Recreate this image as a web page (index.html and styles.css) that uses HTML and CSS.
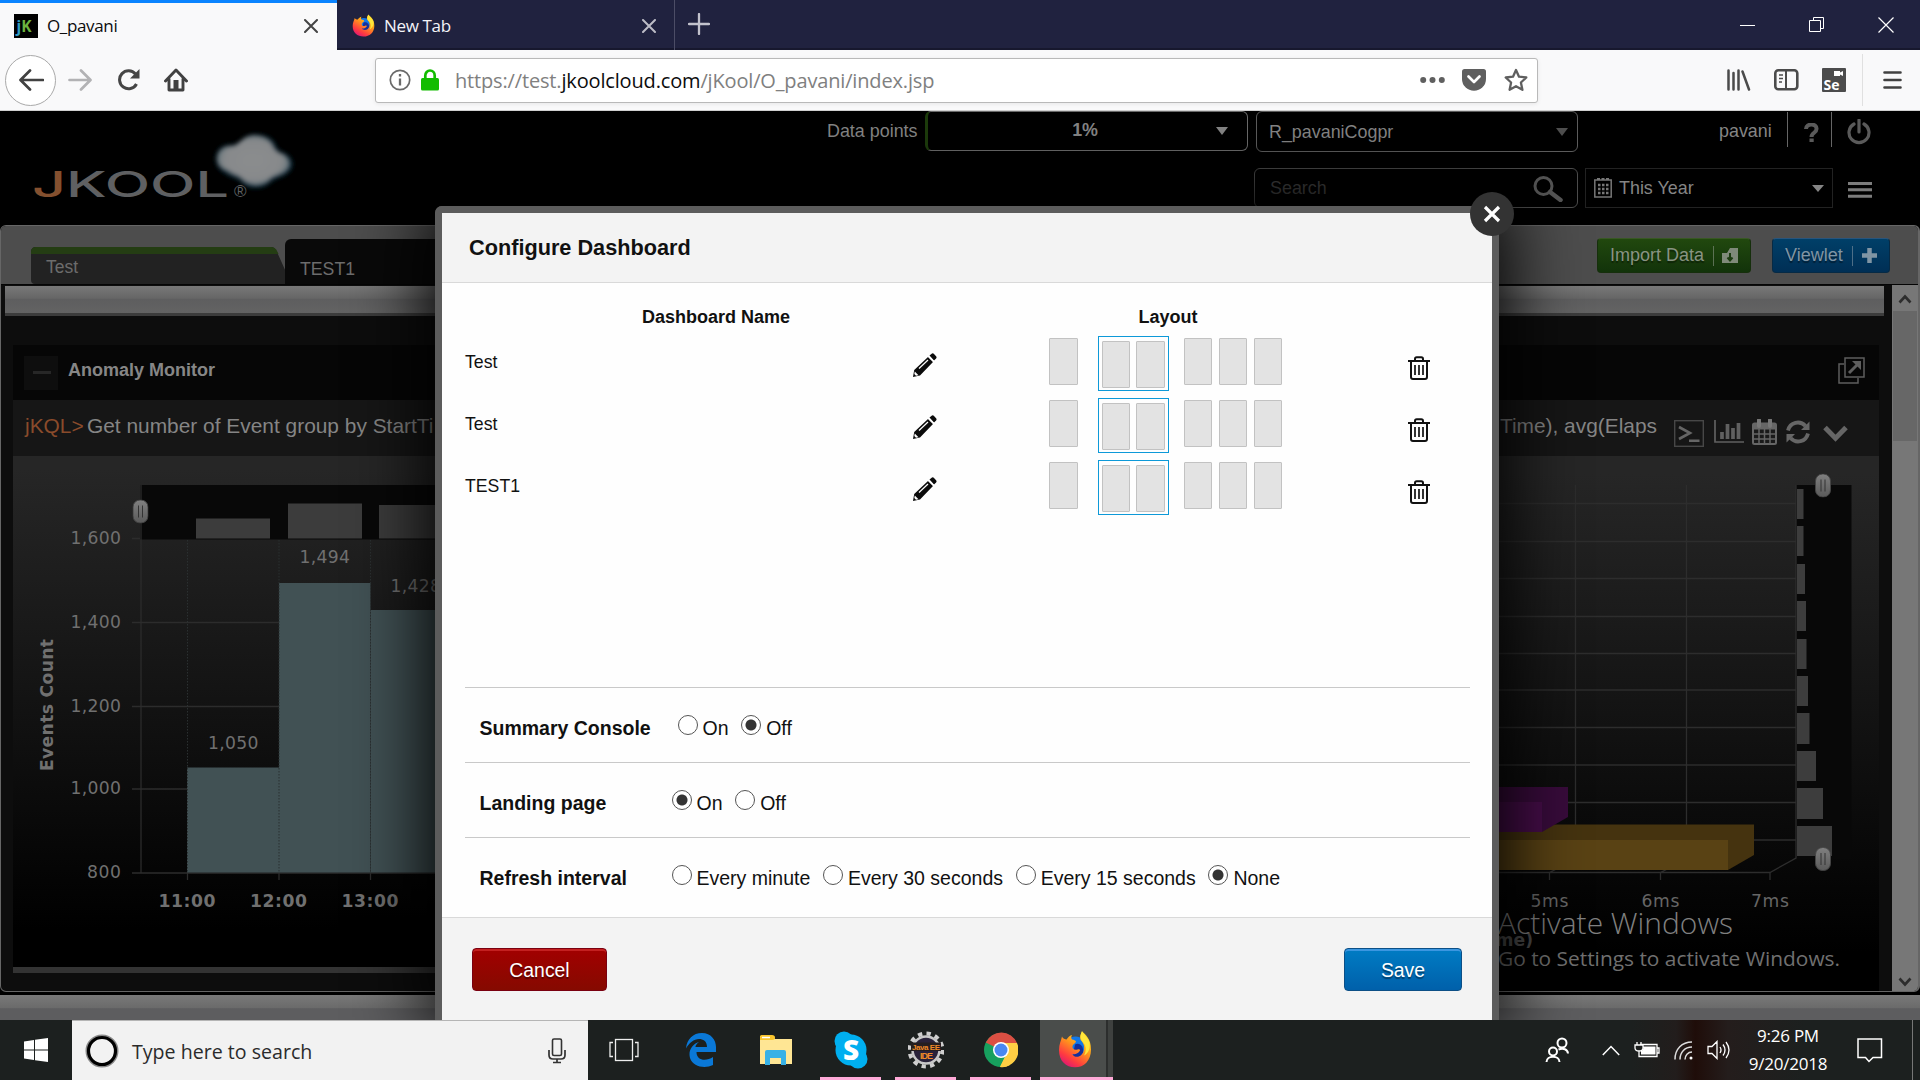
FILE: index.html
```html
<!DOCTYPE html>
<html lang="en">
<head>
<meta charset="utf-8">
<title>O_pavani</title>
<link rel="stylesheet" href="styles.css">
</head>
<body>
<svg class="defs" width="0" height="0" aria-hidden="true">
  <defs>
    <linearGradient id="fire" x1="0.8" y1="0" x2="0.2" y2="1"><stop offset="0" stop-color="#ffe226"/><stop offset=".4" stop-color="#ff9a1a"/><stop offset=".75" stop-color="#ff3b40"/><stop offset="1" stop-color="#d9127c"/></linearGradient>
    <linearGradient id="knob" x1="0" y1="0" x2="0" y2="1"><stop offset="0" stop-color="#808080"/><stop offset="1" stop-color="#5a5a5a"/></linearGradient>
    <radialGradient id="puff"><stop offset="0" stop-color="#8b8d8e"/><stop offset=".8" stop-color="#87898b"/><stop offset="1" stop-color="#6f7b80"/></radialGradient>
    <filter id="soft" x="-20%" y="-20%" width="140%" height="140%"><feGaussianBlur stdDeviation="2.2"/></filter>
    <symbol id="firefox" viewBox="0 0 34 34">
      <circle cx="17.5" cy="17" r="12" fill="#1278e8"/>
      <path fill="#14309b" d="M17 12c5-2 9 2 8 7s-6 8-11 6z"/>
      <path fill="url(#fire)" d="M4 5c1 2 3 2.500 4.500 2.500C10 5.500 12 4 14 3.500c-1 1.500-1 3 0 4 2 .5 3.500.5 4 2-.5 2-3 2-3.500 4-.5 3 2.500 4 5 3 1.500-.5 2.500 0 2.500 1-2 3-5.500 4-8 3 4 5 11 2 12-4 .6-4-1-6-3-8-2-3 0-6 1-8 4 3 9 7 9 16 0 10-7 16-16 16S1 27 1 17C1 12 3 9 4 5z"/>
      <path fill="#ffe63b" d="M24 0c-2 4-2 7 1 10 4 4 3 9 1 12 5-2 7-8 5-13-1-3-5-5-7-9z"/>
    </symbol>
    <symbol id="pencil" viewBox="0 0 24 24">
      <path fill="#0b0b0b" d="M16.500 2.500 19 .600q1-.6 2 .3l2.300 2.600q.7 1-.2 1.900L21 7.500zM15 4l5 5L7 22.500 0 24l1.200-7z"/>
      <path d="M6 15.500 15 7" stroke="#fff" stroke-width="1.200"/><path fill="#fff" d="M1.800 18.500 5.500 22.200 3 22.700 1.300 21z"/><path d="M15.500 3.200 20.800 8.500" stroke="#fff" stroke-width="1.300"/>
    </symbol>
    <symbol id="trash" viewBox="0 0 22 24">
      <g fill="none" stroke="#111" stroke-width="2"><path d="M0 5h22M7 4.500V3q0-1.700 1.700-1.700h4.600Q15 1.300 15 3v1.500M3 5.500V21q0 2 2 2h12q2 0 2-2V5.500"/><path stroke-width="1.700" d="M7 9v10M11 9v10M15 9v10"/></g>
    </symbol>
    <symbol id="grip" viewBox="0 0 16 24"><rect x=".5" y=".5" width="15" height="23" rx="7" fill="url(#knob)" stroke="#444"/><path d="M6 6v12M10 6v12" stroke="#333"/></symbol>
  </defs>
</svg>

<header class="titlebar">
  <div class="tab active"><svg width="24" height="24" viewBox="0 0 24 24"><rect width="24" height="24"/><text x="2.500" y="17.500" font-family="Open Sans,sans-serif" font-weight="700" font-size="15.500" fill="#2f9bc4">j<tspan fill="#6cb33e">K</tspan></text></svg>
    <span class="tab-name">O_pavani</span>
    <svg class="tab-x" width="14" height="14" viewBox="0 0 14 14"><path d="M1 1l12 12M13 1 1 13" stroke="#444" stroke-width="2" stroke-linecap="round"/></svg></div>
  <div class="tab"><svg width="23" height="24"><use href="#firefox"/></svg>
    <span class="tab-name">New Tab</span>
    <svg class="tab-x" width="14" height="14" viewBox="0 0 14 14"><path d="M1 1l12 12M13 1 1 13" stroke="#bcbcc6" stroke-width="2" stroke-linecap="round"/></svg></div>
  <svg class="new-tab" width="22" height="22" viewBox="0 0 22 22"><path d="M11 1v20M1 11h20" stroke="#c2c2cc" stroke-width="2.300" stroke-linecap="round"/></svg>
  <div class="win-controls">
    <svg width="16" height="16" viewBox="0 0 16 16"><path d="M0 8.500h15" stroke="#fff"/></svg>
    <svg width="16" height="16" viewBox="0 0 16 16"><path d="M4.500 3.500v-3h10v11h-3M.5 3.500h11v11H.5z" fill="none" stroke="#fff"/></svg>
    <svg width="16" height="16" viewBox="0 0 16 16"><path d="M.5.500l15 15M15.500.500l-15 15" stroke="#fff" stroke-width="1.200"/></svg>
  </div>
</header>

<nav class="toolbar">
  <span class="back"><svg width="26" height="22" viewBox="0 0 26 22"><path d="M12 1.500 2.500 11l9.500 9.500M3 11h22" fill="none" stroke="#414141" stroke-width="2.700" stroke-linecap="round" stroke-linejoin="round"/></svg></span>
  <svg class="fwd" width="25" height="22" viewBox="0 0 25 22"><path d="M13 1.500l9.500 9.500-9.500 9.500M22 11H1.500" fill="none" stroke="#b2b2b4" stroke-width="2.700" stroke-linecap="round" stroke-linejoin="round"/></svg>
  <svg class="reload" width="24" height="22" viewBox="0 0 24 22"><path d="M18.500 5A9 9 0 1 0 19.500 15" fill="none" stroke="#454545" stroke-width="3"/><path d="M22.500 0v9.500H13z" fill="#454545"/></svg>
  <svg class="home" width="24" height="24" viewBox="0 0 24 24"><path d="M1.500 13 12 2l10.500 11M5 11v11h14V11" fill="none" stroke="#414141" stroke-width="2.900" stroke-linejoin="round" stroke-linecap="round"/><path d="M9.500 12h5v10h-5z" fill="#414141"/></svg>
  <div class="urlbar">
    <svg width="22" height="22" viewBox="0 0 22 22"><circle cx="11" cy="11" r="9.700" fill="none" stroke="#6a6a6a" stroke-width="1.700"/><path d="M11 9.500v7M11 5v2.500" stroke="#6a6a6a" stroke-width="2.300"/></svg>
    <svg class="lock" width="18" height="22" viewBox="0 0 18 22"><rect y="9" width="18" height="12.500" rx="1.500" fill="#12bc00"/><path d="M4.300 10V6.500a4.700 5 0 0 1 9.400 0V10" fill="none" stroke="#12bc00" stroke-width="2.700"/></svg>
    <span class="url">https://test.<b>jkoolcloud.com</b>/jKool/O_pavani/index.jsp</span>
    <svg width="25" height="8" viewBox="0 0 25 8" fill="#5f5f5f"><circle cx="3.200" cy="4" r="3"/><circle cx="12.500" cy="4" r="3"/><circle cx="21.800" cy="4" r="3"/></svg>
    <svg class="pocket" width="24" height="22" viewBox="0 0 24 22"><path d="M2.500 0h19Q24 0 24 2.500V10a12 11.800 0 0 1-24 0V2.500Q0 0 2.500 0z" fill="#5f5f5f"/><path d="m6.500 7.500 5.500 5.500 5.500-5.500" fill="none" stroke="#fff" stroke-width="2.700" stroke-linecap="round" stroke-linejoin="round"/></svg>
    <svg class="star" width="24" height="24" viewBox="0 0 24 24"><path d="m12 2 3 6.700 7.300.8-5.400 5 1.500 7.300L12 18.200l-6.400 3.600 1.500-7.300-5.400-5L9 8.700z" fill="none" stroke="#5f5f5f" stroke-width="2.300" stroke-linejoin="round"/></svg>
  </div>
  <svg class="library" width="24" height="22" viewBox="0 0 24 22"><path d="M1.500 1.500v19M6.500 4v16.500M11.500 1.500v19M15.500 2.500l6.500 18" stroke="#4b4b4b" stroke-width="2.500" stroke-linecap="round"/></svg>
  <svg class="side" width="25" height="22" viewBox="0 0 25 22"><rect x="1.300" y="1.300" width="22" height="19" rx="3" fill="none" stroke="#4b4b4b" stroke-width="2.600"/><path d="M12 1v20" stroke="#4b4b4b" stroke-width="2"/><path d="M5 6h4M5 9.500h4M5 13h3" stroke="#4b4b4b" stroke-width="1.500"/></svg>
  <svg class="se" width="24" height="24" viewBox="0 0 24 24"><rect width="24" height="24" rx="1" fill="#4c4c4c"/><text x="1.500" y="21.500" font-family="Open Sans,sans-serif" font-weight="700" font-size="14" fill="#fff">Se</text><path d="M12 3h6v1.500L21 3v5l-3-1.500V8h-6z" fill="#fff"/></svg>
  <svg class="menu" width="20" height="20" viewBox="0 0 20 20"><path d="M1.500 2.500h16M1.500 10h16M1.500 17.500h16" stroke="#414141" stroke-width="2.600" stroke-linecap="round"/></svg>
</nav>

<main class="page">
  <section class="app-head">
    <svg class="logo" width="300" height="114" viewBox="0 111 300 114">
      <g transform="translate(-1 2)" filter="url(#soft)"><path d="M218 157c0-8 6-13 13-13 6 0 8-2 12-5 9-9 25-6 31 2 2 4 3 8 8 10 8 3 12 9 9 15-4 8-14 8-19 12-7 8-22 9-29 1-4-5-10-4-16-9-6-3-9-8-9-13z" fill="#1c4152" stroke="#123443" stroke-width="3"/>
      <path d="M219 157c0-8 6-12 13-12 5 0 7-3 11-6 9-8 23-5 29 3 2 4 4 8 9 10 8 3 10 9 7 14-4 6-12 6-17 10-7 8-20 8-27 1-4-5-9-4-15-9-6-2-10-6-10-11z" fill="url(#puff)"/></g>
      <text x="32" y="196.500" textLength="197" lengthAdjust="spacingAndGlyphs" font-family="Inter,sans-serif" font-weight="500" font-size="35.500" fill="#5f6062"><tspan fill="#84502f">J</tspan>KOOL</text>
      <text x="234" y="197" font-family="Liberation Sans,sans-serif" font-size="17" fill="#5f6062">®</text>
    </svg>
    <div class="head-controls">
      <div class="head-row first">
        <span class="points-label">Data points</span>
        <div class="points">1%<svg width="12" height="8" viewBox="0 0 12 8"><path d="M0 0h12L6 8z" fill="#858585"/></svg></div>
        <div class="repo">R_pavaniCogpr<svg width="12" height="8" viewBox="0 0 12 8"><path d="M0 0h12L6 8z" fill="#4e4e4e"/></svg></div>
        <span class="user">pavani</span>
        <span class="help"><svg width="15" height="19" viewBox="0 0 15 19"><path d="M2 6C2 0 13 0 12.500 6c0 4-5 3.500-5 8" fill="none" stroke="#5a5a5a" stroke-width="4"/><rect x="5.500" y="15.500" width="4.200" height="3.500" fill="#5a5a5a"/></svg></span>
        <svg class="power" width="24" height="26" viewBox="0 0 24 26"><path d="M7 5a10 10 0 1 0 10 0M12 1v12" fill="none" stroke="#5a5a5a" stroke-width="3.200" stroke-linecap="round"/></svg>
      </div>
      <div class="head-row second">
        <div class="search">Search<svg width="30" height="26" viewBox="0 0 30 26"><circle cx="10.500" cy="10" r="8.500" fill="none" stroke="#565656" stroke-width="3"/><path d="m17 16 10.500 8" stroke="#565656" stroke-width="4.500" stroke-linecap="round"/></svg></div>
        <div class="period"><svg width="18" height="20" viewBox="0 0 18 20"><rect x=".8" y="2" width="16.400" height="17" fill="none" stroke="#777" stroke-width="1.500"/><path d="M4 7h2.500M8 7h2.500M12 7h2.500M4 11h2.500M8 11h2.500M12 11h2.500M4 15h2.500M8 15h2.500M12 15h2.500" stroke="#777" stroke-width="2.500"/><path d="M3 1h12" stroke="#777" stroke-width="2" stroke-dasharray="3 1.500"/></svg><span>This Year</span><svg width="12" height="7" viewBox="0 0 12 7"><path d="M0 0h12L6 7z" fill="#858585"/></svg></div>
        <svg class="burger" width="24" height="16" viewBox="0 0 24 16"><path d="M0 1.500h24M0 7.800h24M0 14.200h24" stroke="#7c7c7c" stroke-width="3"/></svg>
      </div>
    </div>
  </section>

  <section class="workspace">
    <div class="tabs">
      <div class="dash-tab"><svg width="256" height="37" viewBox="0 0 256 37"><path d="M0 5q0-5 5-5h235q4 0 6 5l9 20v12H4q-4 0-4-4z" fill="#222"/><path d="M0 7V5q0-5 5-5h235q4 0 6 4l1.500 3z" fill="#243d13"/><text x="15" y="25.500" font-size="17.500" fill="#6c6c6c" font-family="Liberation Sans,sans-serif">Test</text></svg></div>
      <div class="dash-tab current">TEST1</div>
      <div class="actions">
        <button class="btn green">Import Data<i></i><svg width="16" height="16" viewBox="0 0 16 16"><path d="M0 5h5l3-5h8v15H0z" fill="#7f8a79"/><path d="M8 5v7M5.500 9.500 8 12.500l2.500-3" stroke="#1c3c10" stroke-width="2" fill="none"/></svg></button>
        <button class="btn navy">Viewlet<i></i><svg width="15" height="15" viewBox="0 0 15 15"><path d="M7.500 0v15M0 7.500h15" stroke="#8095a4" stroke-width="4.500"/></svg></button>
      </div>
    </div>
    <div class="board">
      <div class="board-main">
        <div class="band"></div>
        <div class="viewlets">
          <article class="viewlet left">
            <div class="v-head"><svg width="34" height="34" viewBox="0 0 34 34"><rect width="34" height="34" fill="#0e0e0e"/><path d="M9 16.500h18" stroke="#272727" stroke-width="3"/></svg><h3>Anomaly Monitor</h3></div>
            <div class="v-query"><span class="jkql">jKQL&gt;</span><span>Get number of Event group by StartTi</span></div>
            <svg class="chart" width="427" height="510" viewBox="13 456 427 510" font-family="DejaVu Sans,sans-serif" font-size="17.200" fill="#707070">
              <rect x="140" y="485" width="300" height="54.500" fill="#080808"/>
              <g fill="#3c3c3c"><rect x="196" y="518.500" width="74" height="20"/><rect x="288" y="503.500" width="74" height="35"/><rect x="379" y="505" width="61" height="33.500"/></g>
              <path d="M132 538.500h8M132 622.500h308M132 706.500h308M132 789h308M132 873h308M141 485v388M187.500 873v7M279 873v7M370.500 873v7" stroke="#2c2c2c" stroke-width="1.300"/>
              <g fill="#415154"><rect x="187" y="767.500" width="92" height="105"/><rect x="279" y="583" width="91.500" height="289.500"/><rect x="370.500" y="610" width="69.500" height="262.500"/></g>
              <path d="M187.500 540v332M279 540v332M370.500 540v332" stroke="#2b3031" stroke-dasharray="1.500 1.500"/>
              <g text-anchor="end"><text x="121" y="544" textLength="50.500">1,600</text><text x="121" y="627.500" textLength="50.500">1,400</text><text x="121" y="711.500" textLength="50.500">1,200</text><text x="121" y="794" textLength="50.500">1,000</text><text x="121" y="877.500" textLength="34">800</text></g>
              <text x="208" y="749" textLength="50.500">1,050</text><text x="299.500" y="563" textLength="50.500">1,494</text><text x="390.500" y="592" textLength="50.500">1,428</text>
              <g font-weight="700" text-anchor="middle"><text x="187" y="907" textLength="57">11:00</text><text x="278.500" y="907" textLength="57">12:00</text><text x="370" y="907" textLength="57">13:00</text><text transform="translate(52.500 705) rotate(-90)" textLength="132">Events Count</text></g>
              <use href="#grip" x="132.500" y="499.500" width="16" height="24"/>
            </svg>
          </article>
          <article class="viewlet right">
            <div class="v-head"><svg width="27" height="27" viewBox="0 0 27 27" fill="none" stroke="#5e5e5e" stroke-width="1.500"><path d="M6 7H1v19h19v-5"/><rect x="7" y="1" width="19" height="19"/><path d="m11 16 8-8" stroke-width="3"/><path d="M14 4h9v9z" fill="#5e5e5e" stroke="none"/></svg></div>
            <div class="v-query"><span class="tail">Time), avg(Elaps</span>
              <svg class="q-term" width="30" height="27" viewBox="0 0 30 27"><rect x=".7" y=".7" width="28.600" height="25.600" fill="none" stroke="#474747" stroke-width="1.400"/><path d="m5 7 11 6-11 6M15 20.800h10.500" fill="none" stroke="#666" stroke-width="2.600"/></svg>
              <svg class="q-bars" width="30" height="23" viewBox="0 0 30 23"><path d="M1 0v22h29" fill="none" stroke="#606060" stroke-width="1.700"/><path d="M8 19v-7M13.500 19V4M19 19V8M24.500 19V3" stroke="#606060" stroke-width="3.700"/></svg>
              <svg class="q-cal" width="25" height="26" viewBox="0 0 25 26"><rect x="1" y="4.500" width="23" height="20.500" rx="1.500" fill="#1a1a1a" stroke="#666" stroke-width="2"/><path d="M1 7.500h23" stroke="#666" stroke-width="6"/><path d="M2 15h21M2 20h21M7 10v15M12.500 10v15M18 10v15" stroke="#666" stroke-width="1.500"/><path d="M7 1v6M18 1v6" stroke="#777" stroke-width="4" stroke-linecap="round"/></svg>
              <svg class="q-ref" width="24" height="24" viewBox="0 0 24 24"><path d="M2 10.500C4 2 14 0 19.500 6M22 13.500C20 22 10 24 4.500 18" fill="none" stroke="#666" stroke-width="3.800"/><path d="M23.500 1.500V10H15zM.5 22.500V14H9z" fill="#666"/></svg>
              <svg class="q-down" width="25" height="17" viewBox="0 0 25 17"><path d="m2 2.500 10.500 10.700L23 2.500" fill="none" stroke="#666" stroke-width="5"/></svg>
            </div>
            <svg class="chart" width="400" height="534" viewBox="1479 456 400 534" font-family="DejaVu Sans,sans-serif" font-size="17.200" fill="#666">
              <rect x="1796" y="485" width="55.500" height="374" fill="#080808"/>
              <path d="M1479 503.500h317M1479 541.500h317M1479 578.500h317M1479 616.500h317M1479 653.500h317M1479 690h317M1479 727.500h317M1479 765h317M1479 802.500h317M1479 840h317M1575.500 485v360M1686.500 485v360M1796 485v373l-26 14.500H1479M1549.500 880v-7.500l6-3M1660.500 880v-7.500l6-3M1770 872v8" fill="none" stroke="#2d2d2d" stroke-width="1.300"/>
              <path d="M1479 824.500h275V855l-26 15H1479z" fill="#45330f"/><path d="M1479 840h249v30h-249z" fill="#594214"/>
              <path d="M1479 787h89v30l-26 15h-63z" fill="#380b3b"/><path d="M1479 802h63v30h-63z" fill="#460d49"/>
              <g fill="#3d3d3d"><rect x="1797" y="489" width="6.500" height="30"/><rect x="1797" y="526" width="6.500" height="30"/><rect x="1797" y="564" width="8" height="30"/><rect x="1797" y="601" width="9" height="30"/><rect x="1797" y="639" width="9.500" height="30"/><rect x="1797" y="676" width="11" height="30"/><rect x="1797" y="713" width="12.500" height="31"/><rect x="1797" y="751" width="19" height="30"/><rect x="1797" y="788" width="26" height="31"/><rect x="1797" y="826" width="35" height="30"/></g>
              <use href="#grip" x="1815" y="473.500" width="16" height="24"/><use href="#grip" x="1815" y="847" width="16" height="24"/>
              <g text-anchor="middle"><text x="1549.500" y="907" textLength="38">5ms</text><text x="1660.500" y="907" textLength="38">6ms</text><text x="1770" y="907" textLength="38">7ms</text></g>
              <text x="1533" y="946" text-anchor="end" font-weight="700" fill="#4c4c4c">me)</text>
            </svg>
          </article>
        </div>
      </div>
      <div class="scroll"><svg width="14" height="10" viewBox="0 0 14 10"><path d="m1.500 8.500 5.500-6 5.500 6" fill="none" stroke="#2d2d2d" stroke-width="2.600"/></svg><div class="thumb"></div><svg width="14" height="10" viewBox="0 0 14 10"><path d="m1.500 1.500 5.500 6 5.500-6" fill="none" stroke="#2d2d2d" stroke-width="2.600"/></svg></div>
    </div>
  </section>
  <div class="floor"></div>

  <svg class="watermark" width="360" height="70" viewBox="0 0 360 70" font-family="Open Sans,sans-serif" fill="#808080"><text x="0" y="29" font-size="28.500" font-weight="300" textLength="235" lengthAdjust="spacingAndGlyphs">Activate Windows</text><text x="0" y="61" font-size="20" textLength="342" lengthAdjust="spacingAndGlyphs" fill="#707070">Go to Settings to activate Windows.</text></svg>

  <div class="modal" role="dialog">
    <h2>Configure Dashboard</h2>
    <div class="m-body">
      <div class="m-list">
        <div class="cols"><span>Dashboard Name</span><span>Layout</span></div>
        <div class="entry"><span>Test</span><svg class="edit"><use href="#pencil"/></svg><div class="layouts"><div class="one"><i></i></div><div class="two"><i></i><i></i></div><div class="three"><i></i><i></i><i></i></div></div><svg class="del"><use href="#trash"/></svg></div>
        <div class="entry"><span>Test</span><svg class="edit"><use href="#pencil"/></svg><div class="layouts"><div class="one"><i></i></div><div class="two"><i></i><i></i></div><div class="three"><i></i><i></i><i></i></div></div><svg class="del"><use href="#trash"/></svg></div>
        <div class="entry"><span>TEST1</span><svg class="edit"><use href="#pencil"/></svg><div class="layouts"><div class="one"><i></i></div><div class="two"><i></i><i></i></div><div class="three"><i></i><i></i><i></i></div></div><svg class="del"><use href="#trash"/></svg></div>
      </div>
      <div class="option wide"><b>Summary Console</b><label><i class="radio"></i>On</label><label><i class="radio on"></i>Off</label></div>
      <div class="option"><b>Landing page</b><label><i class="radio on"></i>On</label><label><i class="radio"></i>Off</label></div>
      <div class="option"><b>Refresh interval</b><label><i class="radio"></i>Every minute</label><label><i class="radio"></i>Every 30 seconds</label><label><i class="radio"></i>Every 15 seconds</label><label><i class="radio on"></i>None</label></div>
    </div>
    <div class="m-foot"><button class="m-btn cancel">Cancel</button><button class="m-btn save">Save</button></div>
    <span class="close"><svg width="18" height="18" viewBox="0 0 18 18"><path d="m2 2 14 14M16 2 2 16" stroke="#fff" stroke-width="3.200"/></svg></span>
  </div>
</main>

<footer class="taskbar">
  <div class="start"><svg width="24" height="24" viewBox="0 0 24 24" fill="#fff"><path d="M0 3.500 10 2v9.500H0zM11 1.800 24 0v11.500H11zM0 12.500h10V22L0 20.500zM11 12.500h13V24l-13-1.800z"/></svg></div>
  <div class="find"><svg width="34" height="34" viewBox="0 0 34 34"><circle cx="17" cy="17" r="15.500" fill="none" stroke="#888" stroke-width="2"/><circle cx="17" cy="17" r="13.500" fill="none" stroke="#000" stroke-width="3.200"/></svg><span>Type here to search</span><svg width="18" height="26" viewBox="0 0 18 26"><rect x="4.500" y="1" width="9" height="16.500" rx="1.500" fill="none" stroke="#333" stroke-width="1.600"/><path d="M1 12v5q0 4 4 4h8q4 0 4-4v-5M9 21v3.500M5 24.500h8" fill="none" stroke="#333" stroke-width="1.700"/></svg></div>
  <div class="apps">
    <span class="app first-app"><svg width="30" height="24" viewBox="0 0 30 24" fill="none" stroke="#eee" stroke-width="1.300"><rect x="6.500" y="1.500" width="17" height="21"/><path d="M4 4.500H1v14h3M26 4.500h3v14h-3"/></svg></span>
    <span class="app"><svg width="30" height="34" viewBox="0 0 30 34"><path fill="#0a78d7" d="M0 15.500C1 6 7 0 16 0c9 0 14 7 14 14v5H10.500c0 9 10 9.500 16.500 5v8c-8 4-20 2-23-7C2 18 6 11 13 9c-3 2-3.500 4-3.500 5H21c0-6-4-8-8-8-5 0-10 4-13 9.500z"/></svg></span>
    <span class="app"><svg width="32" height="30" viewBox="0 0 32 30"><path d="M0 1h13l2 3h17v25H0z" fill="#ffe694"/><path d="M0 1.500Q0 0 1.500 0H12q3 0 3 2.500T12 5H0z" fill="#f9c52d"/><path d="M2 2.500h8" stroke="#fff" stroke-width="1.500"/><path d="M5 30V17q0-2 2-2h17q2 0 2 2v13h-5v-7H10v7z" fill="#38b1e6"/></svg></span>
    <span class="app open"><svg width="34" height="38" viewBox="0 0 34 38"><circle cx="17" cy="19" r="15.500" fill="#00aff0"/><circle cx="10" cy="10" r="9.500" fill="#00aff0"/><circle cx="24" cy="28" r="9.500" fill="#00aff0"/><text x="17" y="29" text-anchor="middle" font-family="Open Sans,sans-serif" font-size="28" font-weight="800" fill="#fff">S</text></svg></span>
    <span class="app open"><svg width="36" height="38" viewBox="0 0 36 38"><circle cx="18" cy="19" r="16.500" fill="none" stroke="#cfcfcf" stroke-width="4" stroke-dasharray="4.320 4.320"/><circle cx="18" cy="19" r="13.500" fill="#29223a" stroke="#c8c8c8" stroke-width="2.500"/><path d="M3 11.500h30v8.500H3z" fill="#251e20"/><g fill="#f08a28" font-family="Liberation Sans,sans-serif" font-weight="700" text-anchor="middle"><text x="18" y="18.500" font-size="8" textLength="28">Java EE</text><text x="18.500" y="27.500" font-size="9" textLength="13">IDE</text></g></svg></span>
    <span class="app open"><svg width="34" height="36" viewBox="0 0 34 36"><circle cx="17" cy="18" r="17" fill="#17a05e"/><path d="M17 18 1.800 10.500A17 17 0 0 1 33 11z" fill="#db4f43"/><path d="M33 11H17v8l-1 16A17 17 0 0 0 33 11z" fill="#ffce44"/><path d="M9.700 21.500 16 35l6.500-13z" fill="#17a05e"/><path d="M22.500 22 16 35q5 1 10-2z" fill="#ffce44"/><circle cx="17" cy="18" r="8" fill="#fff"/><circle cx="17" cy="18" r="6.500" fill="#4a88f2"/></svg></span>
    <span class="app open focus"><svg width="34" height="38" viewBox="0 0 34 34" preserveAspectRatio="none"><use href="#firefox" width="34" height="34"/></svg></span>
  </div>
  <div class="tray">
    <svg class="t-people" width="24" height="26" viewBox="0 0 24 26" fill="none" stroke="#fff" stroke-width="2"><circle cx="17" cy="6" r="4.500"/><circle cx="8" cy="14.500" r="4"/><path d="M1.500 25c0-7 13-7 13 0M13.500 12.500c5-2 9 0 9.500 4"/></svg>
    <svg class="t-up" width="18" height="11" viewBox="0 0 18 11"><path d="m.8 10 8.200-8.500 8.200 8.500" fill="none" stroke="#fff" stroke-width="1.500"/></svg>
    <svg class="t-bat" width="26" height="18" viewBox="0 0 26 18"><path d="M6 3.500h17v12H5V10M23 7h2v5h-2M3 1v3M7 1v3M1 4h8v3q0 3-4 3T1 7z" fill="none" stroke="#fff" stroke-width="1.300"/><path d="M9 5.500h12.500v8H7V10q3-1 2-4z" fill="#fff"/></svg>
    <svg class="t-wifi" width="19" height="19" viewBox="0 0 19 19" fill="none" stroke="#ddd" stroke-width="1.500"><path d="M1 18.500C1 8 8 1 18 1M6 18.500C6 11 11 6 18 6M11 18.500c0-4 3-7.500 7-7.500"/><circle cx="17" cy="17" r="1.500" fill="#fff" stroke="none"/></svg>
    <svg class="t-vol" width="23" height="20" viewBox="0 0 23 20" fill="none" stroke="#fff" stroke-width="1.300"><path d="M1 6.500h4L10 1.500v17l-5-5H1zM13 7q2 3 0 6M16 4.500q4 5.500 0 11M19 2q6 8 0 16"/></svg>
    <div class="clock"><span>9:26 PM</span><span>9/20/2018</span></div>
    <svg class="t-note" width="26" height="26" viewBox="0 0 26 26"><path d="M1 2h23.500v18.500H16L12 24.500 8.500 20.500H1z" fill="none" stroke="#fff" stroke-width="1.500"/></svg>
  </div>
  <div class="peek"></div>
</footer>
</body>
</html>
```
FILE: styles.css
```css
* { box-sizing: border-box; }
body { margin: 0; width: 1920px; height: 1080px; overflow: hidden; display: flex; flex-direction: column; font-family: "Liberation Sans", Arial, sans-serif; }
svg { display: block; flex: none; }
.defs { position: absolute; }
button { font: inherit; }

/* browser chrome */
.titlebar { height: 50px; flex: none; display: flex; align-items: stretch; background: #20223f; box-shadow: inset 0 -2px #17182e; font-family: "Open Sans", "Noto Sans", sans-serif; font-size: 17px; color: #f4f4f8; }
.tab { width: 338px; display: flex; align-items: center; padding: 1px 18px 0 15px; border-right: 1px solid #4c4d66; }
.tab.active { width: 337px; background: #f9f9fa; color: #0c0c0d; border-top: 3px solid #0a84ff; border-right: 0; padding: 0 19px 2px 14px; }
.tab-name { margin-left: 9px; letter-spacing: -.35px; }
.tab-x { margin-left: auto; }
.new-tab { align-self: center; margin: 0 0 2px 13px; }
.win-controls { margin-left: auto; display: flex; align-items: center; gap: 53px; padding-right: 26px; }
.toolbar { height: 61px; flex: none; display: flex; align-items: center; background: #f9f9fa; border-bottom: 1px solid #cfcfcf; }
.back { width: 51px; height: 51px; margin-left: 5px; border: 1px solid #a9a9a9; border-radius: 50%; background: #fff; display: flex; align-items: center; justify-content: center; }
.fwd { margin-left: 12px; }
.reload { margin-left: 24px; }
.home { margin-left: 23px; }
.urlbar { margin-left: 187px; width: 1163px; height: 45px; border: 1px solid #b9b9b9; border-radius: 3px; background: #fff; box-shadow: 0 1px 4px rgba(0,0,0,.08); display: flex; align-items: center; padding: 0 9px 0 13px; }
.lock { margin-left: 10px; }
.url { margin-left: 16px; flex: 1; font-family: "Open Sans", "Noto Sans", sans-serif; font-size: 20px; letter-spacing: -.16px; color: #808080; }
.url b { font-weight: 400; color: #0c0c0d; }
.pocket { margin-left: 17px; }
.star { margin-left: 18px; }
.library { margin-left: 189px; }
.side { margin-left: 23px; }
.se { margin-left: 23px; }
.menu { box-sizing: content-box; margin-left: 16px; border-left: 1px solid #e0e0e0; padding: 16px 0 16px 20px; }

.page { position: relative; flex: 1; overflow: hidden; background: #000; display: flex; flex-direction: column; }
.app-head { height: 114px; flex: none; display: flex; }
.head-controls { margin-left: 527px; width: 1060px; font-size: 17.9px; color: #858585; }
.head-row { display: flex; }
.first { height: 57px; }
.points-label { width: 98px; line-height: 40px; }
.points { width: 323px; height: 40px; border: 1px solid #6b6b6b; border-left: 3px solid #1d3c0c; border-radius: 6px; display: flex; align-items: center; justify-content: flex-end; font-weight: 700; padding: 0 19px 1px 0; }
.points svg { margin-left: 118px; }
.repo { margin-left: 8px; width: 322px; height: 41px; border: 1px solid #5c5c5c; border-radius: 6px; display: flex; align-items: center; justify-content: space-between; padding: 1px 9px 0 12px; }
.user { margin-left: 141px; width: 68px; line-height: 40px; }
.help { height: 35px; margin-top: 1px; width: 45px; border: solid #666; border-width: 0 1px; display: flex; align-items: center; justify-content: center; padding: 5px 0 0 4px; }
.power { margin: 8px 0 0 15px; }
.second { padding-left: 427px; }
.search { width: 324px; height: 40px; border: 1px solid #4c4c4c; border-radius: 6px; display: flex; align-items: center; justify-content: space-between; padding: 1px 14px 0 15px; color: #444; }
.period { margin-left: 7px; width: 248px; height: 40px; border: 1px solid #222; display: flex; align-items: center; padding: 0 8px; }
.period span { flex: 1; margin-left: 7px; }
.burger { margin: 14px 0 0 15px; }

.workspace { height: 767px; flex: none; border: 1px solid #666; border-width: 1px 2px 1px 1px; border-radius: 6px; background: #0d0d0d; overflow: hidden; display: flex; flex-direction: column; }
.tabs { height: 59px; flex: none; background: #4d4d4d; display: flex; align-items: flex-end; border-bottom: 1px solid #050505; }
.dash-tab { margin-left: 30px; height: 37px; }
.dash-tab.current { margin-left: -2px; width: 260px; height: 45px; background: #090909; border-radius: 6px 0 0 0; padding: 20px 0 0 15px; font-size: 17.7px; color: #6c6c6c; }
.actions { margin-left: auto; display: flex; gap: 21px; padding: 0 28px 11px 0; }
.btn { height: 35px; border-radius: 4px; display: flex; align-items: center; justify-content: space-between; padding: 0 12px; color: #899483; font-size: 18px; white-space: nowrap; text-shadow: 0 2px 1px rgba(0,0,0,.4); }
.btn i { width: 1px; height: 20px; background: currentColor; opacity: .6; }
.green { width: 154px; background: linear-gradient(#21480e, #12330a); border: 1px solid #162f0c; border-top-color: #385823; }
.navy { width: 118px; background: linear-gradient(#003f68, #002f55); border: 1px solid #062a45; border-top-color: #28557d; color: #8095a4; }
.board { flex: 1; display: flex; min-height: 0; }
.board-main { flex: 1; padding-top: 1px; }
.band { height: 30px; margin: 0 8px 29px 4px; background: linear-gradient(#787878, #666 45%, #5e5e5f 50%, #636363); border-bottom: 3px solid #3c3c3c; }
.viewlets { display: flex; margin: 0 13px 0 12px; height: 646px; }
.left { width: 940px; height: 628px; border-bottom: 6px solid #333; }
.right { flex: 1; display: flex; flex-direction: column; }
.v-head { height: 55px; background: #060606; display: flex; align-items: center; padding-left: 11px; }
.v-head h3 { margin: -4px 0 0 10px; font-size: 18px; color: #868686; }
.right .v-head { justify-content: flex-end; padding-right: 14px; padding-bottom: 4px; }
.v-query { height: 56px; background: #161616; color: #858585; font-size: 20.9px; display: flex; padding: 14px 0 0 12px; white-space: nowrap; }
.jkql { width: 62px; color: #8a4b2b; }
.right .v-query { justify-content: flex-end; padding: 14px 31px 0 0; }
.q-term { margin: 6px 0 0 17px; }
.q-bars { margin: 6px 0 0 10px; }
.q-cal { margin: 5px 0 0 8px; }
.q-ref { margin: 6px 0 0 9px; }
.q-down { margin: 11px 0 0 13px; }
.viewlet { background: linear-gradient(#262626 20%, #000 94%); }
.right .chart { align-self: flex-end; }
.scroll { width: 26px; background: #777; display: flex; flex-direction: column; align-items: center; padding: 9px 0 4px; }
.thumb { width: 24px; height: 130px; background: #676767; margin: 7px 0 auto; flex: none; }
.floor { flex: 1; margin-top: 3px; background: linear-gradient(#797979, #6b6b6b 50%, #5d5d5f 55%); }
.watermark { position: absolute; left: 1498px; top: 794px; }

/* dialog */
.modal { position: absolute; left: 435px; top: 95px; width: 1064px; height: 815px; border: 7px solid #5c5c5c; border-bottom: 0; border-radius: 7px 7px 0 0; box-shadow: 0 0 75px 8px #000; background: #f3f3f3; display: flex; flex-direction: column; color: #111; }
.modal h2 { margin: 0; height: 70px; padding: 21px 0 0 27px; border-bottom: 1px solid #d9d9d9; font-size: 21.7px; line-height: 27px; }
.m-body { height: 634px; background: #fefefe; padding: 0 22px 0 23px; }
.m-list { height: 404px; padding-top: 22px; }
.cols { display: grid; grid-template-columns: 502px 402px; height: 31px; line-height: 24px; font-size: 18px; font-weight: 700; text-align: center; }
.entry { display: grid; grid-template-columns: 448px 136px 359px 22px; height: 62px; font-size: 17.7px; }
.entry span { padding-top: 16px; line-height: 20px; }
.edit { width: 24px; height: 24px; margin-top: 17px; }
.del { width: 22px; height: 24px; margin-top: 20px; }
.layouts { display: flex; align-items: flex-start; }
.layouts div { display: flex; gap: 6.500px; }
.layouts i { width: 28.500px; height: 47px; background: #e3e3e3; border: 1px solid #c2c2c2; border-radius: 1px; }
.one, .three { padding-top: 2px; }
.two { margin: 0 15px 0 20px; border: 1px solid #0d99d8; padding: 3.500px 3px; height: 55px; width: 71px; }
.option { height: 75px; border-top: 1px solid #c9c9c9; display: flex; align-items: flex-start; padding: 27px 0 0 14.500px; font-size: 19.5px; line-height: 26px; }
.option b { width: 192px; }
.option.wide b { width: 198px; }
.option label { display: flex; margin-right: 12.700px; }
.radio { width: 20px; height: 20px; border: 1.500px solid #555; border-radius: 50%; margin-right: 5px; background: #fff; }
.radio.on { background: radial-gradient(circle, #333 5px, #fff 6px); }
.m-foot { flex: 1; border-top: 1px solid #d9d9d9; display: flex; justify-content: space-between; align-items: flex-start; padding: 30px 30px 0; }
.m-btn { height: 43px; border-radius: 4px; color: #fff; font-size: 19.4px; text-shadow: 0 2px 1px rgba(0,0,0,.4); padding: 2px 0 0; }
.cancel { width: 135px; border: 1px solid #7a0010; background: linear-gradient(#a20000, #850a00); box-shadow: inset 0 2px #c32020; }
.save { width: 118px; border: 1px solid #0c4f86; background: linear-gradient(#007cc4, #0060aa); box-shadow: inset 0 2px #3b96e0; }
.close { position: absolute; left: 1028px; top: -21px; width: 44px; height: 44px; border-radius: 50%; background: #333; display: flex; align-items: center; justify-content: center; }

/* taskbar */
.taskbar { height: 60px; flex: none; display: flex; color: #fff; background: linear-gradient(90deg, #1c201f 0 85%, #221d1c 87.300%, #1f0d09 88.300%, #241d1c 90%, #1c201f 94%); font-family: "Open Sans", "Noto Sans", sans-serif; }
.start { width: 72px; display: flex; align-items: center; justify-content: center; }
.find { width: 516px; background: #f2f2f2; border-top: 1px solid #b5b5b5; color: #2b2b2b; display: flex; align-items: center; padding: 0 22px 0 13px; font-size: 19.600px; }
.find span { flex: 1; margin: 2px 0 0 13px; }
.apps { display: flex; margin-left: -2px; }
.app { width: 75px; display: flex; align-items: center; justify-content: center; }
.first-app { width: 76px; }
.open { background: linear-gradient(#ffaad8, #ffaad8) 8px 100% / 61px 3px no-repeat; }
.app:not(.first-app):not(.focus) { padding-left: 2px; }
.focus { width: 73px; margin-left: 3px; padding-right: 3px; background: linear-gradient(#ffaad8, #ffaad8) 0 100% / 73px 3px no-repeat, linear-gradient(90deg, #4a4d4b 66px, #2c2e2d 66px 68px, #3e413f 68px); }
.tray { margin-left: auto; display: flex; align-items: center; width: 367px; }
.t-up { margin-left: 33px; }
.t-bat { margin-left: 14px; }
.t-wifi { margin-left: 14px; }
.t-vol { margin-left: 14px; }
.clock { width: 116px; display: flex; flex-direction: column; align-items: center; font-size: 17px; line-height: 28px; letter-spacing: -.25px; }
.t-note { margin-left: 11px; }
.peek { width: 8px; border-left: 1px solid #777; }
```
